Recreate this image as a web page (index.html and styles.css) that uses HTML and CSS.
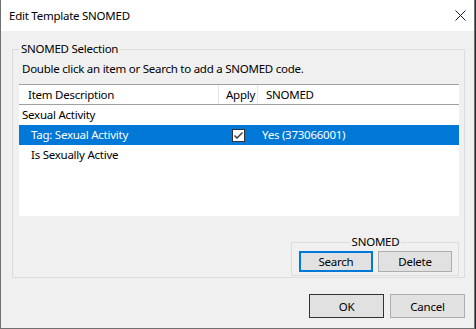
FILE: index.html
```html
<!DOCTYPE html>
<html lang="en">
<head>
    <meta charset="UTF-8">
    <title>Edit Template SNOMED</title>
    <link rel="stylesheet" href="styles.css">
</head>
<body>

<div class="window">
    <div class="titlebar">
        <span class="title">Edit Template SNOMED</span>
        <svg class="close" width="11" height="11" viewBox="0 0 11 11">
            <path d="M0.5 0.5 L10.5 10.5 M10.5 0.5 L0.5 10.5" stroke="#1a1a1a" stroke-width="1" fill="none"/>
        </svg>
    </div>

    <div class="client">
        <fieldset class="group main-group">
            <legend>SNOMED Selection</legend>
            <p class="hint">Double click an item or Search to add a SNOMED code.</p>

            <div class="list">
                <div class="list-head">
                    <div class="col col-desc">Item Description</div>
                    <div class="col col-apply">Apply</div>
                    <div class="col col-code">SNOMED</div>
                </div>
                <div class="row parent-row">
                    <div class="col col-desc">Sexual Activity</div>
                </div>
                <div class="row child-row selected">
                    <div class="col col-desc">Tag: Sexual Activity</div>
                    <div class="col col-apply">
                        <span class="check">
                            <svg width="11" height="11" viewBox="0 0 11 11">
                                <path d="M1.5 5.5 L4 8 L9.5 2.5" stroke="#333" stroke-width="1.4" fill="none"/>
                            </svg>
                        </span>
                    </div>
                    <div class="col col-code">Yes (373066001)</div>
                </div>
                <div class="row child-row">
                    <div class="col col-desc">Is Sexually Active</div>
                </div>
            </div>

            <div class="group-actions">
                <fieldset class="group small-group">
                    <legend>SNOMED</legend>
                    <button class="btn focused">Search</button>
                    <button class="btn">Delete</button>
                </fieldset>
            </div>
        </fieldset>

        <div class="dialog-buttons">
            <button class="btn default">OK</button>
            <button class="btn">Cancel</button>
        </div>
    </div>
</div>

</body>
</html>
```

FILE: styles.css
```css
body {
    margin: 0;
    background: #22304a;
    font-family: 'Noto Sans', sans-serif;
    font-size: 11.5px;
    letter-spacing: -0.25px;
    color: #000;
}

.window {
    width: 475px;
    height: 329px;
    box-sizing: border-box;
    border: 1px solid #707070;
    border-top: none;
    background: #f0f0f0;
    display: flex;
    flex-direction: column;
}

.titlebar {
    height: 31px;
    background: #fff;
    display: flex;
    align-items: center;
    justify-content: space-between;
    padding: 0 8px 0 8px;
}

.title {
    font-size: 11.5px;
    line-height: 16px;
}

.close {
    display: block;
}

.client {
    flex: 1;
    padding: 10px 9px 10px 11px;
    display: flex;
    flex-direction: column;
}

.group {
    margin: 0;
    min-width: 0;
    border: 1px solid #dcdcdc;
}

.group legend {
    padding: 0 2px;
    line-height: 16px;
}

.main-group {
    padding: 0 5px 1px 6px;
}

.hint {
    margin: 4px 0 7px 3px;
    line-height: 16px;
}

/* list view */
.list {
    height: 132px;
    background: #fff;
}

.list-head {
    display: flex;
    height: 19px;
    border-top: 1px solid #a0a0a0;
    border-bottom: 1px solid #a0a0a0;
}

.list-head .col {
    line-height: 19px;
    border-right: 1px solid #e5e5e5;
}

.list-head .col-code {
    border-right: none;
}

.col {
    box-sizing: border-box;
    white-space: nowrap;
}

.col-desc {
    width: 200px;
    padding-left: 9px;
}

.col-apply {
    width: 39px;
    padding-left: 7px;
}

.col-code {
    flex: 1;
    padding-left: 8px;
}

.row {
    display: flex;
    height: 20px;
    line-height: 20px;
}

.parent-row .col-desc {
    padding-left: 3px;
}

.child-row .col-desc {
    padding-left: 12px;
}

.row .col-apply {
    padding-left: 0;
    display: flex;
    align-items: center;
    justify-content: center;
}

.row .col-code {
    padding-left: 4px;
}

.selected {
    background: #0078d7;
    color: #fff;
}

.check {
    width: 11px;
    height: 11px;
    border: 1px solid #333;
    background: #fff;
    display: block;
}

.check svg {
    display: block;
}

/* SNOMED buttons group */
.group-actions {
    display: flex;
    justify-content: flex-end;
    margin-top: 18px;
}

.small-group {
    width: 168px;
    box-sizing: border-box;
    padding: 1px 6px 3px 7px;
    display: flex;
    gap: 5px;
}

.small-group legend {
    margin: 0 auto;
}

.btn {
    font-family: 'Noto Sans', sans-serif;
    font-size: 11.5px;
    letter-spacing: -0.25px;
    color: #000;
    background: #e1e1e1;
    border: 1px solid #adadad;
    padding: 0;
    margin: 0;
    width: 74px;
    height: 21px;
    box-sizing: border-box;
}

.btn.focused {
    border: 2px solid #0078d7;
}

.dialog-buttons {
    display: flex;
    justify-content: flex-end;
    gap: 6px;
    margin-top: 16px;
}

.dialog-buttons .btn {
    width: 75px;
    height: 24px;
}

.btn.default {
    border-color: #333;
}
```
